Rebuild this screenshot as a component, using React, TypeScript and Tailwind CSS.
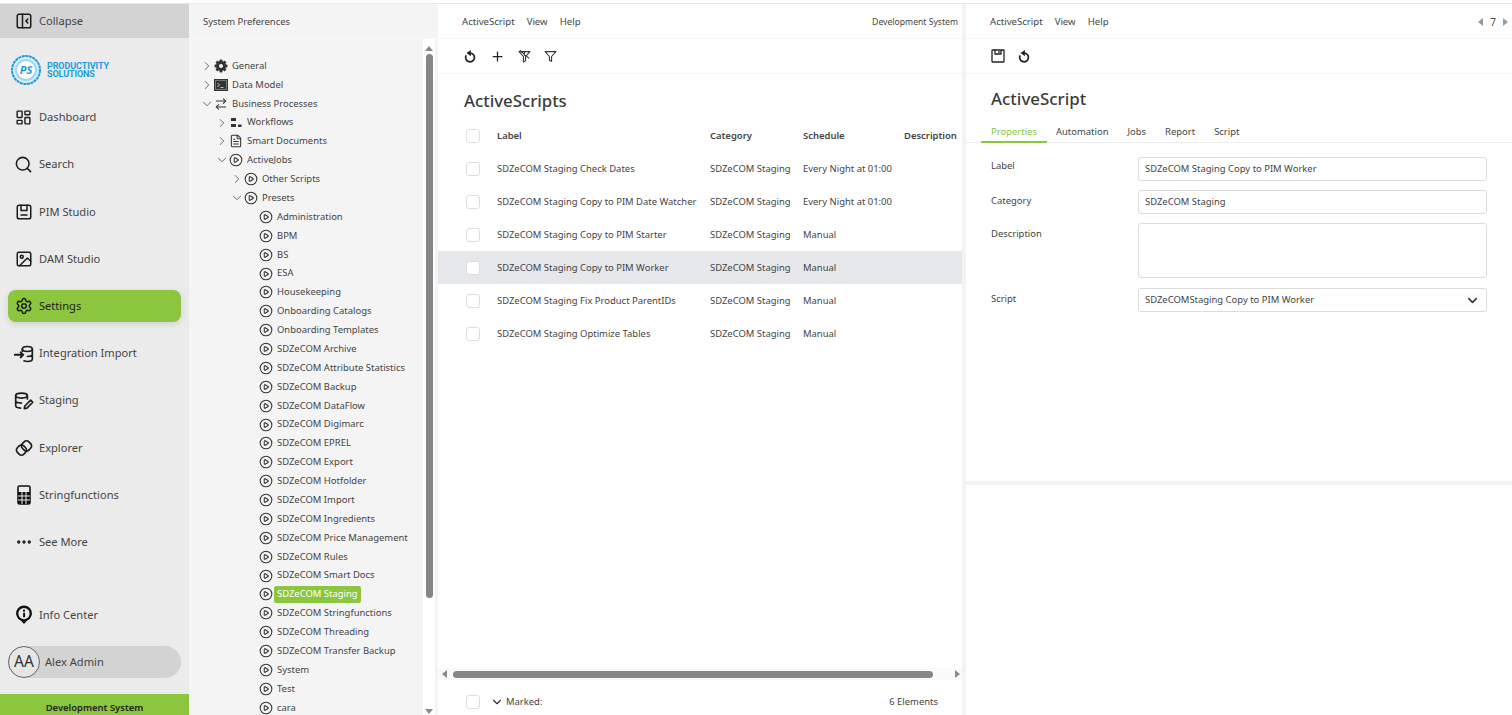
import React from 'react';
import {
  ChevronDown,
  ChevronRight,
  CirclePlay,
  Ellipsis,
  FileText,
  Image,
  Plus,
  Search,
  Settings,
  LayoutDashboard,
  ArrowRightLeft,
} from 'lucide-react';

const Ico = ({ children, size = 18 }: { children: React.ReactNode; size?: number }) => (
  <svg width={size} height={size} viewBox="0 0 24 24" fill="none" stroke="#1c1c1c" strokeWidth={2} strokeLinecap="round" strokeLinejoin="round">
    {children}
  </svg>
);

const CollapseIcon = () => (
  <Ico>
    <rect x="3" y="3" width="18" height="18" rx="2.5" />
    <path d="M10 3v18M17 9.5 14.5 12l2.5 2.5" />
  </Ico>
);
const PimIcon = () => (
  <Ico>
    <rect x="3" y="3" width="18" height="18" rx="2.5" />
    <path d="M8 3v7h8V3M8 16h8" />
  </Ico>
);
const ImportIcon = () => (
  <Ico size={20}>
    <ellipse cx="16" cy="6" rx="6" ry="3" />
    <path d="M10 6v3M22 6v12c0 1.7-2.7 3-6 3-1.5 0-3-.3-4-.8M22 12c0 1.7-2.7 3-6 3" />
    <path d="M1 13h10M8 10l3 3-3 3" strokeWidth="2.4" />
  </Ico>
);
const StagingIcon = () => (
  <Ico size={20}>
    <ellipse cx="9" cy="5.500" rx="7" ry="3" />
    <path d="M2 5.500v12c0 1.700 2.500 3 6 3M2 11.500c0 1.700 3 3 7 3M16 5.500v4" />
    <path d="M20 11l2.500 2.500-7 7-3.200.7.700-3.200z" />
  </Ico>
);
const ExplorerIcon = () => (
  <Ico size={20}>
    <rect x="9.500" y="4" width="11" height="11" rx="4" transform="rotate(45 15 9.500)" />
    <rect x="3.500" y="9" width="11" height="11" rx="4" transform="rotate(45 9 14.500)" />
  </Ico>
);
const InfoPinIcon = () => (
  <svg width="18" height="20" viewBox="0 0 24 26">
    <path d="M12 25 8 20.500A10.500 10.500 0 1 1 16 20.500Z" fill="#111" />
    <circle cx="12" cy="11" r="7.500" fill="#ebebeb" />
    <rect x="10.800" y="10" width="2.600" height="6" fill="#111" />
    <circle cx="12" cy="7.300" r="1.500" fill="#111" />
  </svg>
);
const CalcIcon = () => (
  <svg width="14" height="20" viewBox="0 0 14 20">
    <rect x="1" y="1" width="12" height="18" rx="1.500" fill="none" stroke="#111" strokeWidth="1.600" />
    <rect x="1" y="7" width="12" height="12" fill="#111" />
    <path d="M5 7v12M9 7v12M1 11h12M1 15h12" stroke="#ebebeb" strokeWidth="1" />
  </svg>
);
const RefreshIcon = () => (
  <svg width="14" height="14" viewBox="0 0 24 24" fill="none">
    <path d="M12 7a7.500 7.500 0 1 1-7 5" stroke="#222" strokeWidth="3" strokeLinecap="round" />
    <path d="M13.500 1.500v11L6 7Z" fill="#222" />
  </svg>
);
const SaveIcon = () => (
  <svg width="14" height="14" viewBox="0 0 14 14" fill="none" stroke="#222" strokeWidth="1.300">
    <rect x="1" y="1" width="12" height="12" rx=".5" />
    <path d="M4 1v4h6V1" />
    <path d="M8 2v2" />
  </svg>
);
const FilterOff = () => (
  <svg width="13" height="13" viewBox="0 0 24 24" fill="none" stroke="#333" strokeWidth="2" strokeLinejoin="round" strokeLinecap="round">
    <path d="M2 3h20l-8 9v8l-4 2V12Z" />
    <path d="M4 1l16 14M12 3v7" />
  </svg>
);
const FilterPlain = () => (
  <svg width="13" height="13" viewBox="0 0 24 24" fill="none" stroke="#333" strokeWidth="2" strokeLinejoin="round">
    <path d="M2 3h20l-8 9v9l-4-2v-7Z" />
  </svg>
);
const WorkflowIcon = () => (
  <svg width="14" height="14" viewBox="0 0 14 14" fill="#333">
    <rect x="2" y="2" width="5" height="3" />
    <rect x="2" y="8" width="5" height="3" />
    <rect x="9" y="8.500" width="3.500" height="2.500" />
  </svg>
);
const GearFill = () => (
  <svg width="14" height="14" viewBox="0 0 24 24">
    <g fill="#333">
      <circle cx="12" cy="12" r="8.500" />
      <rect x="9.500" y="1" width="5" height="22" />
      <rect x="9.500" y="1" width="5" height="22" transform="rotate(45 12 12)" />
      <rect x="9.500" y="1" width="5" height="22" transform="rotate(90 12 12)" />
      <rect x="9.500" y="1" width="5" height="22" transform="rotate(135 12 12)" />
    </g>
    <circle cx="12" cy="12" r="3.500" fill="#f4f4f4" />
  </svg>
);
const TerminalBox = () => (
  <svg width="14" height="14" viewBox="0 0 14 14">
    <rect x=".5" y="1.500" width="13" height="11" fill="#777" stroke="#333" />
    <rect x="2" y="3" width="10" height="8" fill="#333" />
    <path d="M3.500 5l2 2-2 2M6.500 9.500h3" stroke="#eee" strokeWidth=".8" fill="none" />
  </svg>
);

const navTop = [
  { label: 'Dashboard', icon: <LayoutDashboard size={17} color="#1c1c1c" strokeWidth={2} /> },
  { label: 'Search', icon: <Search size={19} color="#1c1c1c" strokeWidth={2} /> },
  { label: 'PIM Studio', icon: <PimIcon /> },
  { label: 'DAM Studio', icon: <Image size={18} color="#1c1c1c" strokeWidth={2} /> },
  { label: 'Settings', icon: <Settings size={18} color="#1c1c1c" strokeWidth={2} />, active: true },
  { label: 'Integration Import', icon: <ImportIcon /> },
  { label: 'Staging', icon: <StagingIcon /> },
  { label: 'Explorer', icon: <ExplorerIcon /> },
  { label: 'Stringfunctions', icon: <CalcIcon /> },
  { label: 'See More', icon: <Ellipsis size={18} color="#1c1c1c" strokeWidth={2.500} /> },
];

type TreeRow = { label: string; level: number; chevron?: 'r' | 'd'; icon?: React.ReactNode; selected?: boolean };

const playIcon = <CirclePlay size={14} color="#333" strokeWidth={1.800} />;

const leaves = [
  'Administration', 'BPM', 'BS', 'ESA', 'Housekeeping', 'Onboarding Catalogs', 'Onboarding Templates',
  'SDZeCOM Archive', 'SDZeCOM Attribute Statistics', 'SDZeCOM Backup', 'SDZeCOM DataFlow', 'SDZeCOM Digimarc',
  'SDZeCOM EPREL', 'SDZeCOM Export', 'SDZeCOM Hotfolder', 'SDZeCOM Import', 'SDZeCOM Ingredients',
  'SDZeCOM Price Management', 'SDZeCOM Rules', 'SDZeCOM Smart Docs', 'SDZeCOM Staging', 'SDZeCOM Stringfunctions',
  'SDZeCOM Threading', 'SDZeCOM Transfer Backup', 'System', 'Test', 'cara',
];

const tree: TreeRow[] = [
  { label: 'General', level: 0, chevron: 'r', icon: <GearFill /> },
  { label: 'Data Model', level: 0, chevron: 'r', icon: <TerminalBox /> },
  { label: 'Business Processes', level: 0, chevron: 'd', icon: <ArrowRightLeft size={14} color="#333" strokeWidth={1.800} /> },
  { label: 'Workflows', level: 1, chevron: 'r', icon: <WorkflowIcon /> },
  { label: 'Smart Documents', level: 1, chevron: 'r', icon: <FileText size={14} color="#333" strokeWidth={1.800} /> },
  { label: 'ActiveJobs', level: 1, chevron: 'd', icon: playIcon },
  { label: 'Other Scripts', level: 2, chevron: 'r', icon: playIcon },
  { label: 'Presets', level: 2, chevron: 'd', icon: playIcon },
  ...leaves.map((label) => ({ label, level: 3, icon: playIcon, selected: label === 'SDZeCOM Staging' })),
];

const indent = ['pl-[11px]', 'pl-[26px]', 'pl-[41px]', 'pl-[56px]'];

const rows = [
  { label: 'SDZeCOM Staging Check Dates', schedule: 'Every Night at 01:00' },
  { label: 'SDZeCOM Staging Copy to PIM Date Watcher', schedule: 'Every Night at 01:00' },
  { label: 'SDZeCOM Staging Copy to PIM Starter', schedule: 'Manual' },
  { label: 'SDZeCOM Staging Copy to PIM Worker', schedule: 'Manual', selected: true },
  { label: 'SDZeCOM Staging Fix Product ParentIDs', schedule: 'Manual' },
  { label: 'SDZeCOM Staging Optimize Tables', schedule: 'Manual' },
];

const Check = () => <div className="w-[14px] h-[14px] shrink-0 rounded-[3px] border border-[#dedede] bg-white" />;

const Sidebar = () => (
  <aside className="w-[189px] shrink-0 bg-[#ebebeb] flex flex-col text-[11.100px] text-[#444]">
    <div className="h-[34px] shrink-0 bg-[#d3d3d3] flex items-center px-[8px]">
      <span className="w-[31px] flex justify-center shrink-0"><CollapseIcon /></span>
      <span>Collapse</span>
    </div>
    <div className="h-[56px] shrink-0 flex items-center pl-[11px] pt-[8px] gap-[6px]">
      <svg width="30" height="30" viewBox="0 0 30 30">
        <circle cx="15" cy="15" r="14" fill="#d9effb" stroke="#1b9bdc" strokeWidth="2" strokeDasharray="3 .6" />
        <circle cx="15" cy="15" r="10" fill="#fff" stroke="#9ed6f3" strokeWidth="2" />
        <text x="15" y="19" textAnchor="middle" fontSize="11" fontStyle="italic" fontWeight="700" fill="#1b9bdc">PS</text>
      </svg>
      <div className="flex flex-col text-[#1b9bdc] text-[9px] leading-[8px] font-bold font-['Roboto',sans-serif] tracking-[-0.1px]">
        <span>PRODUCTIVITY</span>
        <span>SOLUTIONS</span>
      </div>
    </div>
    {navTop.map((n) => (
      <div key={n.label} className="h-[47.200px] shrink-0 flex items-center px-[8px]">
        <div className={`w-full h-[32px] flex items-center rounded-[8px] ${n.active ? 'bg-[#8bc63e] shadow-[0_2px_6px_rgba(0,0,0,0.12)] text-[#222]' : ''}`}>
          <span className="w-[31px] flex justify-center shrink-0">{n.icon}</span>
          <span className="truncate">{n.label}</span>
        </div>
      </div>
    ))}
    <div className="flex-1" />
    <div className="h-[32px] shrink-0 flex items-center px-[8px] mb-[15px]">
      <span className="w-[31px] flex justify-center shrink-0"><InfoPinIcon /></span>
      <span>Info Center</span>
    </div>
    <div className="mx-[8px] h-[32px] shrink-0 rounded-full bg-[#d3d3d3] flex items-center">
      <div className="w-[32px] h-[32px] rounded-full border border-[#666] bg-[#e6e6e6] flex items-center justify-center text-[15.500px] text-[#333]">AA</div>
      <span className="ml-[5px]">Alex Admin</span>
    </div>
    <div className="mt-[16px] h-[21px] shrink-0 bg-[#8bc63e] flex justify-center pt-[7px] text-[9.450px] leading-[14px] font-semibold text-[#222]">
      Development System
    </div>
  </aside>
);

const TreePanel = () => (
  <section className="w-[249px] shrink-0 bg-[#f4f4f4] flex flex-col text-[9.450px] text-[#444]">
    <div className="h-[35px] shrink-0 flex items-center pl-[14px] pt-[2px] border-b border-[#f8f8f8]">System Preferences</div>
    <div className="flex-1 min-h-0 flex">
      <div className="flex-1 pt-[17.500px] overflow-hidden">
        {tree.map((t) => (
          <div key={t.label} className={`h-[18.880px] flex items-center ${indent[t.level]}`}>
            <span className="w-[14px] shrink-0 flex items-center">
              {t.chevron === 'r' && <ChevronRight size={14} color="#555" strokeWidth={1.500} />}
              {t.chevron === 'd' && <ChevronDown size={14} color="#555" strokeWidth={1.500} />}
            </span>
            <span className="w-[14px] shrink-0 flex justify-center">{t.icon}</span>
            {t.selected ? (
              <span className="ml-[1px] px-[3px] h-[17px] flex items-center rounded-[2px] bg-[#8bc63e] text-white whitespace-nowrap">{t.label}</span>
            ) : (
              <span className="ml-[4px] whitespace-nowrap">{t.label}</span>
            )}
          </div>
        ))}
      </div>
      <div className="w-[12px] shrink-0 bg-white flex flex-col items-center pt-[7px] pb-[1px]">
        <div className="w-0 h-0 border-x-[4px] border-x-transparent border-b-[5px] border-b-[#888]" />
        <div className="mt-[3px] w-[7px] h-[544px] rounded-full bg-[#868686]" />
        <div className="flex-1" />
        <div className="w-0 h-0 border-x-[4px] border-x-transparent border-t-[5px] border-t-[#888]" />
      </div>
      <div className="w-[3px] shrink-0" />
    </div>
  </section>
);

const ListPanel = () => (
  <section className="w-[524px] shrink-0 bg-white flex flex-col text-[9.450px] text-[#444]">
    <div className="h-[35px] shrink-0 flex items-center pl-[24px] pr-[4px] pt-[2px] gap-[12px] border-b border-[#f6f6f6] text-[9.600px]">
      <span>ActiveScript</span>
      <span>View</span>
      <span>Help</span>
      <span className="ml-auto text-[8.650px]">Development System</span>
    </div>
    <div className="h-[35px] shrink-0 flex items-center pl-[25px] gap-[13px] border-b border-[#f4f4f4]">
      <RefreshIcon />
      <Plus size={15} color="#222" strokeWidth={2} />
      <FilterOff />
      <FilterPlain />
    </div>
    <h1 className="h-[46px] shrink-0 pl-[26px] flex items-center pt-[7px] text-[16.800px] font-medium text-[#3c3c3c]">ActiveScripts</h1>
    <div className="h-[32px] shrink-0 flex items-center pl-[28px] font-semibold">
      <Check />
      <span className="w-[196px] ml-[17px]">Label</span>
      <span className="w-[93px] ml-[17px]">Category</span>
      <span className="w-[101px]">Schedule</span>
      <span>Description</span>
    </div>
    {rows.map((r) => (
      <div key={r.label} className={`h-[33px] shrink-0 flex items-center pl-[28px] ${r.selected ? 'bg-[#e6e7ea]' : ''}`}>
        <Check />
        <span className="w-[196px] ml-[17px] pt-[1px] whitespace-nowrap">{r.label}</span>
        <span className="w-[93px] ml-[17px] pt-[1px] whitespace-nowrap">SDZeCOM Staging</span>
        <span className="pt-[1px] whitespace-nowrap">{r.schedule}</span>
      </div>
    ))}
    <div className="flex-1" />
    <div className="h-[12px] shrink-0 bg-[#fafafa] flex items-center pl-[4px] pr-[2px]">
      <div className="w-0 h-0 border-y-[4px] border-y-transparent border-r-[5px] border-r-[#888]" />
      <div className="ml-[6px] w-[480px] h-[7px] rounded-full bg-[#868686]" />
      <div className="flex-1" />
      <div className="w-0 h-0 border-y-[4px] border-y-transparent border-l-[5px] border-l-[#888]" />
    </div>
    <div className="h-[35px] shrink-0 flex items-center pl-[28px] pr-[24px] pt-[9px]">
      <Check />
      <ChevronDown size={14} color="#333" strokeWidth={2} className="ml-[10px]" />
      <span className="ml-[2px]">Marked:</span>
      <span className="ml-auto">6 Elements</span>
    </div>
  </section>
);

const Field = ({ label, children, className, labelClass }: { label: string; children: React.ReactNode; className: string; labelClass: string }) => (
  <div className={`flex pl-[25px] pr-[25px] ${className}`}>
    <span className={`w-[147px] shrink-0 ${labelClass}`}>{label}</span>
    {children}
  </div>
);

const boxClass = 'flex-1 rounded-[3px] border border-[#dcdcdc] bg-white px-[6px] flex items-center';

const DetailPanel = () => (
  <section className="flex-1 min-w-0 bg-white flex flex-col text-[9.450px] text-[#444]">
    <div className="h-[35px] shrink-0 flex items-center pl-[24px] pr-[4px] pt-[2px] gap-[12px] border-b border-[#f6f6f6] text-[9.600px]">
      <span>ActiveScript</span>
      <span>View</span>
      <span>Help</span>
      <span className="ml-auto flex items-center gap-[7px]">
        <span className="w-0 h-0 border-y-[4px] border-y-transparent border-r-[5px] border-r-[#999]" />
        <span className="text-[10px]">7</span>
        <span className="w-0 h-0 border-y-[4px] border-y-transparent border-l-[5px] border-l-[#999]" />
      </span>
    </div>
    <div className="h-[35px] shrink-0 flex items-center pl-[25px] gap-[12px] border-b border-[#f4f4f4]">
      <SaveIcon />
      <RefreshIcon />
    </div>
    <h2 className="h-[50px] shrink-0 pl-[25px] flex items-center text-[16.900px] font-medium text-[#3c3c3c]">ActiveScript</h2>
    <div className="h-[19px] shrink-0 flex border-b border-[#ececec] pl-[15px] leading-[16px]">
      <span className="h-[19px] w-[66px] flex justify-center border-b-2 border-[#8bc63e] text-[#8bc63e]">Properties</span>
      <span className="ml-[9px]">Automation</span>
      <span className="ml-[19px]">Jobs</span>
      <span className="ml-[19px]">Report</span>
      <span className="ml-[19px]">Script</span>
    </div>
    <div className="h-[338px] shrink-0 pt-[14px] flex flex-col">
      <Field label="Label" labelClass="pt-[2px]" className="h-[24px]"><div className={boxClass}>SDZeCOM Staging Copy to PIM Worker</div></Field>
      <Field label="Category" labelClass="pt-[4px]" className="h-[24px] mt-[9px]"><div className={boxClass}>SDZeCOM Staging</div></Field>
      <Field label="Description" labelClass="pt-[4px]" className="h-[55px] mt-[9px]"><div className={boxClass} /></Field>
      <Field label="Script" labelClass="pt-[4px]" className="h-[24px] mt-[10px]">
        <div className={boxClass}>
          <span>SDZeCOMStaging Copy to PIM Worker</span>
          <ChevronDown size={15} color="#333" strokeWidth={2.500} className="ml-auto" />
        </div>
      </Field>
    </div>
    <div className="h-[4px] shrink-0 bg-[#f3f3f3]" />
  </section>
);

export default function App() {
  return (
    <div className="h-[715px] w-[1512px] overflow-hidden bg-white font-['Noto_Sans',sans-serif] flex flex-col">
      <div className="h-[4px] shrink-0 bg-white border-b border-[#e8e8e8]" />
      <div className="flex-1 min-h-0 flex">
        <Sidebar />
        <TreePanel />
        <ListPanel />
        <div className="w-[4px] shrink-0 bg-[#f3f3f3]" />
        <DetailPanel />
      </div>
    </div>
  );
}
